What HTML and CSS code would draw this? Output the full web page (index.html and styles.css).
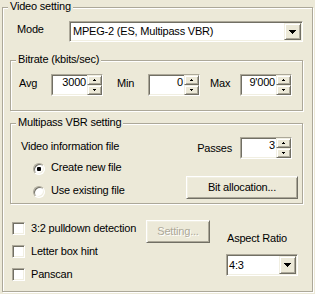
FILE: index.html
```html
<!DOCTYPE html>
<html>
<head>
<meta charset="utf-8">
<link rel="stylesheet" href="styles.css">
</head>
<body>
<div class="group outer">
  <div class="gtitle">Video setting</div>
  <div class="mode-row">
    <span class="mode-lbl">Mode</span>
    <div class="combo combo-mode">
      <span class="combo-text">MPEG-2 (ES, Multipass VBR)</span>
      <span class="cbtn"><svg width="7" height="4" viewBox="0 0 7 4" shape-rendering="crispEdges"><rect x="0" y="0" width="7" height="1"/><rect x="1" y="1" width="5" height="1"/><rect x="2" y="2" width="3" height="1"/><rect x="3" y="3" width="1" height="1"/></svg></span>
    </div>
  </div>

  <div class="group inner bitrate">
    <div class="gtitle">Bitrate (kbits/sec)</div>
    <div class="br-row">
      <span class="lbl lbl-avg">Avg</span>
      <div class="spin">
        <div class="spin-edit">3000</div>
        <div class="ud">
          <div class="ub"><svg width="3" height="2" viewBox="0 0 3 2" shape-rendering="crispEdges"><rect x="1" y="0" width="1" height="1"/><rect x="0" y="1" width="3" height="1"/></svg></div>
          <div class="ub"><svg width="3" height="2" viewBox="0 0 3 2" shape-rendering="crispEdges"><rect x="0" y="0" width="3" height="1"/><rect x="1" y="1" width="1" height="1"/></svg></div>
        </div>
      </div>
      <span class="lbl lbl-min">Min</span>
      <div class="spin">
        <div class="spin-edit">0</div>
        <div class="ud">
          <div class="ub"><svg width="3" height="2" viewBox="0 0 3 2" shape-rendering="crispEdges"><rect x="1" y="0" width="1" height="1"/><rect x="0" y="1" width="3" height="1"/></svg></div>
          <div class="ub"><svg width="3" height="2" viewBox="0 0 3 2" shape-rendering="crispEdges"><rect x="0" y="0" width="3" height="1"/><rect x="1" y="1" width="1" height="1"/></svg></div>
        </div>
      </div>
      <span class="lbl lbl-max">Max</span>
      <div class="spin">
        <div class="spin-edit">9'000</div>
        <div class="ud">
          <div class="ub"><svg width="3" height="2" viewBox="0 0 3 2" shape-rendering="crispEdges"><rect x="1" y="0" width="1" height="1"/><rect x="0" y="1" width="3" height="1"/></svg></div>
          <div class="ub"><svg width="3" height="2" viewBox="0 0 3 2" shape-rendering="crispEdges"><rect x="0" y="0" width="3" height="1"/><rect x="1" y="1" width="1" height="1"/></svg></div>
        </div>
      </div>
    </div>
  </div>

  <div class="group inner multipass">
    <div class="gtitle">Multipass VBR setting</div>
    <div class="mp-body">
      <div class="mp-left">
        <div class="vif">Video information file</div>
        <div class="radio-row first"><span class="radio"><span class="dot"></span></span><span>Create new file</span></div>
        <div class="radio-row"><span class="radio"></span><span>Use existing file</span></div>
      </div>
      <div class="mp-right">
        <div class="passes-row">
          <span class="passes-lbl">Passes</span>
          <div class="spin">
            <div class="spin-edit">3</div>
            <div class="ud">
              <div class="ub"><svg width="3" height="2" viewBox="0 0 3 2" shape-rendering="crispEdges"><rect x="1" y="0" width="1" height="1"/><rect x="0" y="1" width="3" height="1"/></svg></div>
              <div class="ub"><svg width="3" height="2" viewBox="0 0 3 2" shape-rendering="crispEdges"><rect x="0" y="0" width="3" height="1"/><rect x="1" y="1" width="1" height="1"/></svg></div>
            </div>
          </div>
        </div>
        <div class="btn btn-bit">Bit allocation...</div>
      </div>
    </div>
  </div>

  <div class="bottom">
    <div class="checks">
      <div class="check-row first"><span class="cb"></span><span>3:2 pulldown detection</span></div>
      <div class="check-row"><span class="cb"></span><span>Letter box hint</span></div>
      <div class="check-row"><span class="cb"></span><span>Panscan</span></div>
    </div>
    <div class="btn btn-setting disabled">Setting...</div>
    <div class="aspect">
      <div class="aspect-lbl">Aspect Ratio</div>
      <div class="combo combo-aspect">
        <span class="combo-text">4:3</span>
        <span class="cbtn"><svg width="7" height="4" viewBox="0 0 7 4" shape-rendering="crispEdges"><rect x="0" y="0" width="7" height="1"/><rect x="1" y="1" width="5" height="1"/><rect x="2" y="2" width="3" height="1"/><rect x="3" y="3" width="1" height="1"/></svg></span>
      </div>
    </div>
  </div>
</div>
</body>
</html>
```

FILE: styles.css
```css
* { box-sizing: border-box; }
html, body { margin: 0; padding: 0; }
body {
  width: 315px;
  height: 294px;
  overflow: hidden;
  background: #ECE9D8;
  color: #000;
  font-family: "Liberation Sans", Arial, sans-serif;
  font-size: 11px;
  line-height: 13px;
  letter-spacing: -0.2px;
}

/* etched group box */
.group {
  border: 1px solid #ACA899;
  box-shadow: inset 1px 1px #fff, 1px 1px #fff;
}
.outer {
  margin: 7px 0 0 2px;
  width: 311px;
  height: 285px;
}
.inner {
  margin-left: 7px;
  width: 293px;
}
.gtitle {
  margin: -8px 0 0 5px;
  padding: 0 2px;
  width: fit-content;
  background: #ECE9D8;
  white-space: nowrap;
}

/* mode row */
.mode-row {
  display: flex;
  margin: 8px 0 0 14px;
}
.mode-lbl {
  width: 52px;
  margin-top: 2px;
}

/* combobox */
.combo {
  display: flex;
  border: 1px solid;
  border-color: #ACA899 #fff #fff #ACA899;
  box-shadow: inset 1px 1px #716F64, inset -1px -1px #F1EFE2;
  background: #fff;
  padding: 1px;
}
.combo-mode { width: 234px; height: 21px; }
.combo-aspect { width: 72px; height: 22px; }
.combo-text {
  flex: 1;
  padding-left: 2px;
  line-height: 17px;
  white-space: nowrap;
}
.combo-aspect .combo-text { line-height: 18px; padding-left: 1px; }
.cbtn {
  width: 17px;
  height: 100%;
  display: flex;
  align-items: center;
  justify-content: center;
  background: #ECE9D8;
  border: 1px solid;
  border-color: #F1EFE2 #716F64 #716F64 #F1EFE2;
  box-shadow: inset 1px 1px #fff, inset -1px -1px #ACA899;
}
.cbtn svg { display: block; fill: #000; }

/* bitrate */
.bitrate {
  margin-top: 18px;
  height: 51px;
}
.br-row {
  display: flex;
  align-items: flex-start;
  margin: 8px 0 0 8px;
}
.lbl { margin-top: 3px; }
.lbl-avg { width: 32px; }
.lbl-min { width: 31px; margin-left: 14px; }
.lbl-max { width: 30px; margin-left: 10px; }

/* spinner */
.spin {
  display: flex;
  width: 52px;
  height: 22px;
  border: 1px solid;
  border-color: #ACA899 #fff #fff #ACA899;
  background: #fff;
}
.spin-edit {
  flex: 1;
  border-style: solid;
  border-width: 1px 0 1px 1px;
  border-color: #716F64 transparent #F1EFE2 #716F64;
  text-align: right;
  padding-right: 1px;
  line-height: 13px;
}
.ud {
  width: 15px;
  display: flex;
  flex-direction: column;
}
.ub {
  height: 10px;
  display: flex;
  align-items: center;
  justify-content: center;
  background: #ECE9D8;
  border: 1px solid;
  border-color: #F1EFE2 #716F64 #716F64 #F1EFE2;
  box-shadow: inset 1px 1px #fff, inset -1px -1px #ACA899;
}
.ub svg { display: block; fill: #000; }

/* multipass */
.multipass {
  margin-top: 12px;
  height: 81px;
}
.mp-body {
  display: flex;
  justify-content: space-between;
  align-items: flex-start;
}
.mp-left { margin: 11px 0 0 10px; }
.radio-row {
  display: flex;
  align-items: flex-start;
  margin: 9px 0 0 12px;
}
.radio-row.first { margin-top: 8px; }
.radio {
  width: 12px;
  height: 12px;
  margin: 2px 6px 0 0;
  border-radius: 50%;
  border: 1px solid;
  border-color: #ACA899 #fff #fff #ACA899;
  box-shadow: inset 1px 1px #716F64, inset -1px -1px #F1EFE2;
  background: #fff;
  display: flex;
  align-items: center;
  justify-content: center;
}
.dot {
  width: 4px;
  height: 4px;
  border-radius: 1px;
  background: #000;
}
.mp-right {
  margin: 8px 4px 0 0;
  display: flex;
  flex-direction: column;
  align-items: flex-end;
}
.passes-row {
  display: flex;
  align-items: flex-start;
  margin-right: 6px;
}
.passes-lbl { margin: 5px 8px 0 0; }

/* push buttons */
.btn {
  height: 23px;
  display: flex;
  align-items: center;
  justify-content: center;
  background: #ECE9D8;
  border: 1px solid;
  border-color: #fff #716F64 #716F64 #fff;
  box-shadow: inset 1px 1px #F1EFE2, inset -1px -1px #ACA899;
  white-space: nowrap;
}
.btn-bit {
  width: 112px;
  margin-top: 17px;
}
.btn-setting {
  width: 64px;
  margin-top: 16px;
}
.disabled {
  color: #ACA899;
  text-shadow: 1px 1px #fff;
}

/* bottom area */
.bottom {
  display: flex;
  align-items: flex-start;
}
.checks {
  width: 134px;
  margin-left: 9px;
}
.check-row {
  display: flex;
  align-items: flex-start;
  margin-top: 10px;
}
.check-row.first { margin-top: 18px; }
.cb {
  width: 13px;
  height: 13px;
  margin-right: 6px;
  border: 1px solid;
  border-color: #ACA899 #fff #fff #ACA899;
  box-shadow: inset 1px 1px #716F64, inset -1px -1px #F1EFE2;
  background: #fff;
}
.aspect { margin-left: 16px; }
.aspect-lbl {
  margin: 28px 0 0 1px;
  white-space: nowrap;
}
.combo-aspect { margin-top: 9px; }
```
